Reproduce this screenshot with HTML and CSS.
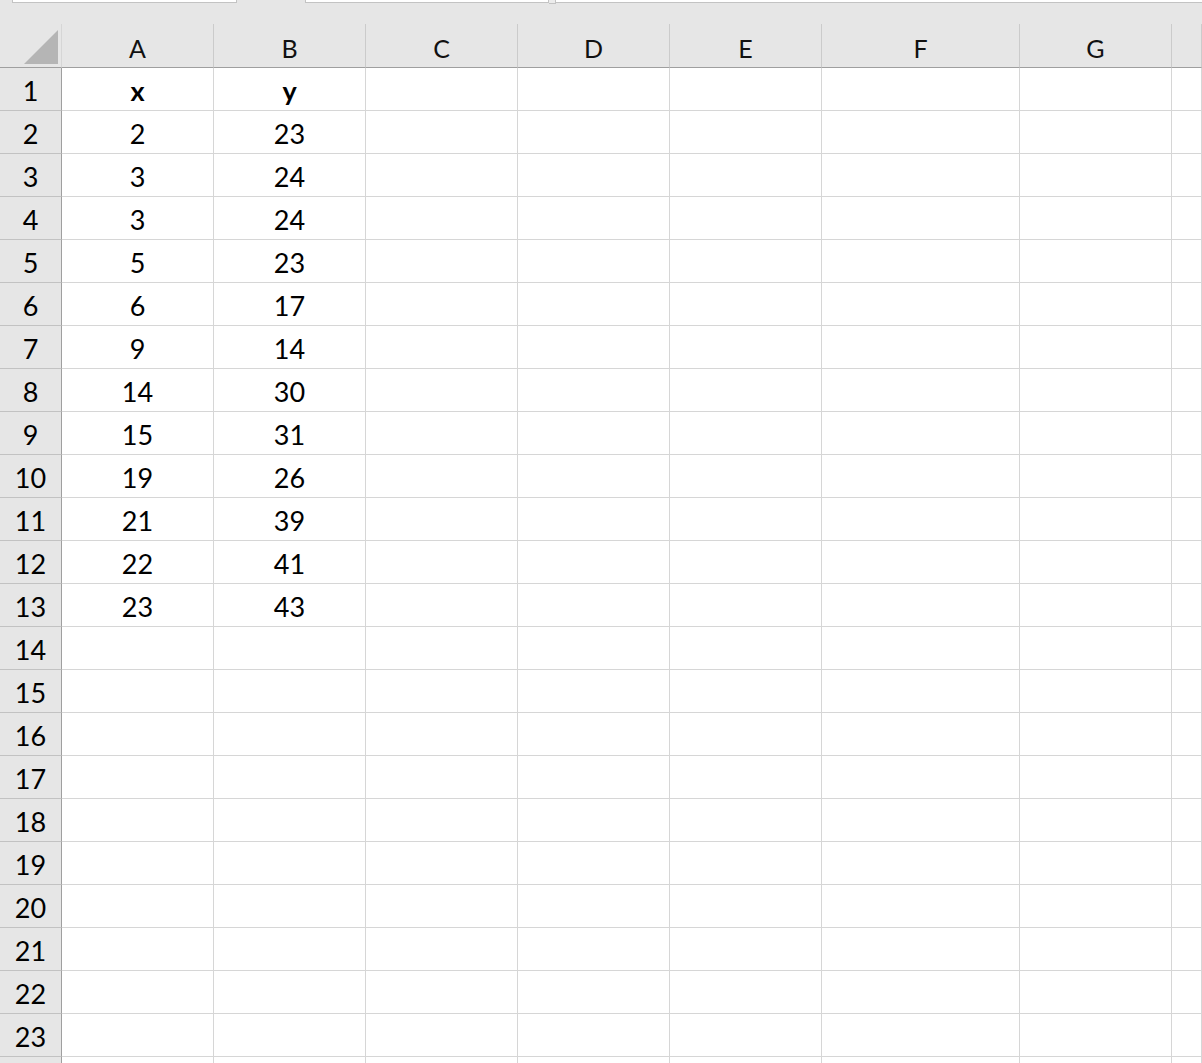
FILE: index.html
```html
<!DOCTYPE html>
<html>
<head>
<meta charset="utf-8">
<link rel="stylesheet" href="styles.css">
</head>
<body>
<div class="sheet">
  <div class="topstrip">
    <div class="box box1"></div>
    <div class="box box2"></div>
    <div class="box notch"></div>
    <div class="box box3"></div>
  </div>
  <div class="row head">
    <div class="h corner"><div class="tri"></div></div>
    <div class="h">A</div><div class="h">B</div><div class="h">C</div><div class="h">D</div><div class="h">E</div><div class="h">F</div><div class="h">G</div><div class="h"></div>
  </div>
  <div class="row"><div class="rh">1</div><div class="c b">x</div><div class="c b">y</div><div class="c"></div><div class="c"></div><div class="c"></div><div class="c"></div><div class="c"></div><div class="c"></div></div>
  <div class="row"><div class="rh">2</div><div class="c">2</div><div class="c">23</div><div class="c"></div><div class="c"></div><div class="c"></div><div class="c"></div><div class="c"></div><div class="c"></div></div>
  <div class="row"><div class="rh">3</div><div class="c">3</div><div class="c">24</div><div class="c"></div><div class="c"></div><div class="c"></div><div class="c"></div><div class="c"></div><div class="c"></div></div>
  <div class="row"><div class="rh">4</div><div class="c">3</div><div class="c">24</div><div class="c"></div><div class="c"></div><div class="c"></div><div class="c"></div><div class="c"></div><div class="c"></div></div>
  <div class="row"><div class="rh">5</div><div class="c">5</div><div class="c">23</div><div class="c"></div><div class="c"></div><div class="c"></div><div class="c"></div><div class="c"></div><div class="c"></div></div>
  <div class="row"><div class="rh">6</div><div class="c">6</div><div class="c">17</div><div class="c"></div><div class="c"></div><div class="c"></div><div class="c"></div><div class="c"></div><div class="c"></div></div>
  <div class="row"><div class="rh">7</div><div class="c">9</div><div class="c">14</div><div class="c"></div><div class="c"></div><div class="c"></div><div class="c"></div><div class="c"></div><div class="c"></div></div>
  <div class="row"><div class="rh">8</div><div class="c">14</div><div class="c">30</div><div class="c"></div><div class="c"></div><div class="c"></div><div class="c"></div><div class="c"></div><div class="c"></div></div>
  <div class="row"><div class="rh">9</div><div class="c">15</div><div class="c">31</div><div class="c"></div><div class="c"></div><div class="c"></div><div class="c"></div><div class="c"></div><div class="c"></div></div>
  <div class="row"><div class="rh">10</div><div class="c">19</div><div class="c">26</div><div class="c"></div><div class="c"></div><div class="c"></div><div class="c"></div><div class="c"></div><div class="c"></div></div>
  <div class="row"><div class="rh">11</div><div class="c">21</div><div class="c">39</div><div class="c"></div><div class="c"></div><div class="c"></div><div class="c"></div><div class="c"></div><div class="c"></div></div>
  <div class="row"><div class="rh">12</div><div class="c">22</div><div class="c">41</div><div class="c"></div><div class="c"></div><div class="c"></div><div class="c"></div><div class="c"></div><div class="c"></div></div>
  <div class="row"><div class="rh">13</div><div class="c">23</div><div class="c">43</div><div class="c"></div><div class="c"></div><div class="c"></div><div class="c"></div><div class="c"></div><div class="c"></div></div>
  <div class="row"><div class="rh">14</div><div class="c"></div><div class="c"></div><div class="c"></div><div class="c"></div><div class="c"></div><div class="c"></div><div class="c"></div><div class="c"></div></div>
  <div class="row"><div class="rh">15</div><div class="c"></div><div class="c"></div><div class="c"></div><div class="c"></div><div class="c"></div><div class="c"></div><div class="c"></div><div class="c"></div></div>
  <div class="row"><div class="rh">16</div><div class="c"></div><div class="c"></div><div class="c"></div><div class="c"></div><div class="c"></div><div class="c"></div><div class="c"></div><div class="c"></div></div>
  <div class="row"><div class="rh">17</div><div class="c"></div><div class="c"></div><div class="c"></div><div class="c"></div><div class="c"></div><div class="c"></div><div class="c"></div><div class="c"></div></div>
  <div class="row"><div class="rh">18</div><div class="c"></div><div class="c"></div><div class="c"></div><div class="c"></div><div class="c"></div><div class="c"></div><div class="c"></div><div class="c"></div></div>
  <div class="row"><div class="rh">19</div><div class="c"></div><div class="c"></div><div class="c"></div><div class="c"></div><div class="c"></div><div class="c"></div><div class="c"></div><div class="c"></div></div>
  <div class="row"><div class="rh">20</div><div class="c"></div><div class="c"></div><div class="c"></div><div class="c"></div><div class="c"></div><div class="c"></div><div class="c"></div><div class="c"></div></div>
  <div class="row"><div class="rh">21</div><div class="c"></div><div class="c"></div><div class="c"></div><div class="c"></div><div class="c"></div><div class="c"></div><div class="c"></div><div class="c"></div></div>
  <div class="row"><div class="rh">22</div><div class="c"></div><div class="c"></div><div class="c"></div><div class="c"></div><div class="c"></div><div class="c"></div><div class="c"></div><div class="c"></div></div>
  <div class="row"><div class="rh">23</div><div class="c"></div><div class="c"></div><div class="c"></div><div class="c"></div><div class="c"></div><div class="c"></div><div class="c"></div><div class="c"></div></div>
  <div class="row"><div class="rh"></div><div class="c"></div><div class="c"></div><div class="c"></div><div class="c"></div><div class="c"></div><div class="c"></div><div class="c"></div><div class="c"></div></div>
</div>
</body>
</html>
```
FILE: styles.css
```css
html, body {
  margin: 0;
  padding: 0;
  background: #ffffff;
  overflow: hidden;
}
.sheet {
  width: 1202px;
  height: 1063px;
  overflow: hidden;
  font-family: Lato, "Liberation Sans", sans-serif;
  color: #000;
}
.topstrip {
  height: 24px;
  background: #e6e6e6;
  display: flex;
  align-items: flex-start;
}
.box {
  background: #ffffff;
  border: 1px solid #c3c3c3;
  border-top: none;
  height: 2px;
  box-sizing: content-box;
}
.box1 { margin-left: 12px; width: 223px; }
.box2 { margin-left: 68px; width: 242px; }
.notch { width: 6px; height: 3px; border-left: none; background: #ececec; }
.box3 { flex: 1; margin-right: -4px; border-left: none; }
.row {
  display: grid;
  grid-template-columns: 62px 152px 152px 152px 152px 152px 198px 152px 1fr;
  height: 43px;
}
.row.head { height: 44px; }
.h {
  background: #e6e6e6;
  border-right: 1px solid #cbcbcb;
  border-bottom: 1px solid #9f9f9f;
  display: flex;
  align-items: center;
  justify-content: center;
  padding-top: 5px;
  box-sizing: border-box;
  font-size: 25px;
  color: #111;
}
.corner {
  justify-content: flex-end;
  align-items: flex-end;
  padding: 0 3px 3px 0;
  border-right-color: #d6d6d6;
}
.tri {
  width: 34px;
  height: 34px;
  background: #b5b5b5;
  clip-path: polygon(100% 0, 100% 100%, 0 100%);
}
.rh {
  background: #e6e6e6;
  border-right: 1px solid #9f9f9f;
  border-bottom: 1px solid #c2c2c2;
  display: flex;
  align-items: center;
  justify-content: center;
  padding-top: 3px;
  box-sizing: border-box;
  font-size: 27px;
}
.c {
  border-right: 1px solid #d6d6d6;
  border-bottom: 1px solid #d6d6d6;
  display: flex;
  align-items: center;
  justify-content: center;
  padding-top: 3px;
  box-sizing: border-box;
  font-size: 27px;
}
.c.b { font-weight: 700; }
```
